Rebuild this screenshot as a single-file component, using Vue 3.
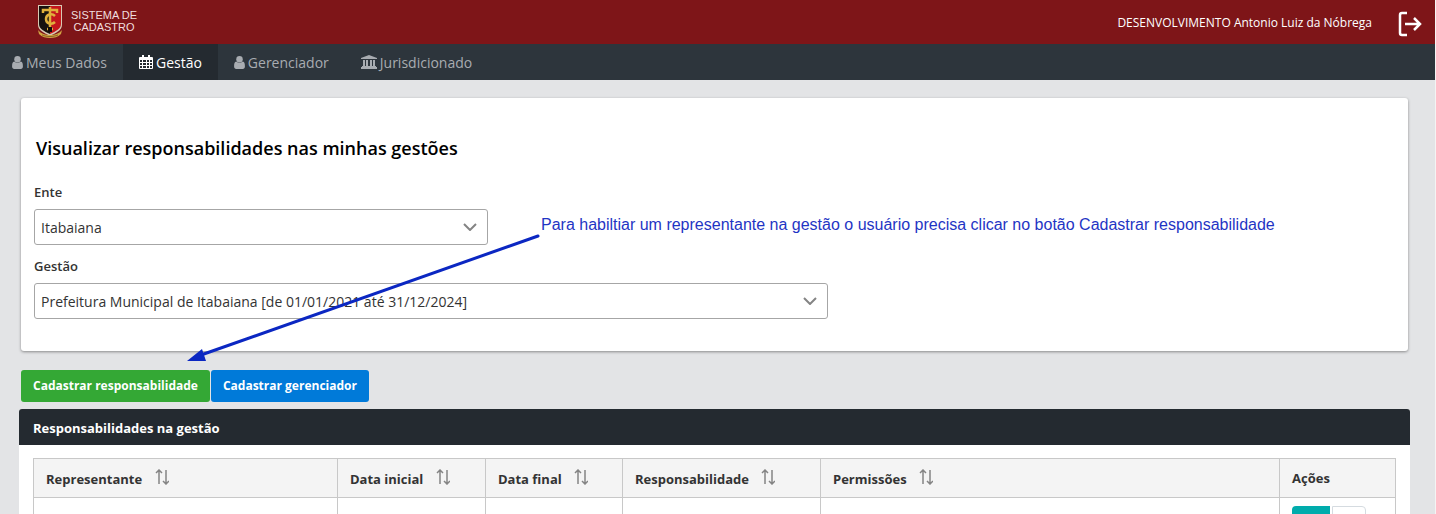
<template>
  <div class="page">
    <header class="topbar">
      <a href="#" class="brand">
        <svg class="crest" viewBox="0 0 26 34" aria-hidden="true">
          <path d="M1 1h24v20c0 5-6 8-12 11C7 29 1 26 1 21z" fill="#d8c9b4" />
          <path d="M2 2h11v28C7 27 2 25 2 20z" fill="#17120f" />
          <path d="M13 2h11v18c0 5-5 7-11 10z" fill="#c4161c" />
          <path d="M6 9V6h14v3M13 3v23M10 25h6" fill="none" stroke="#e0b03c" stroke-width="2.500" />
          <path d="M18 12c-3-3-9-2-9 3s6 6 9 3" fill="none" stroke="#e0b03c" stroke-width="2.500" />
          <path d="M11 23h4v5h-4z" fill="#120c0c" />
          <path d="M1 26c3 4 8 5 12 5s9-1 12-5l-1 4c-3 3-7 4-11 4S5 33 2 30z" fill="#d1a443" />
          <path d="M5 31c5 2 11 2 16 0" fill="none" stroke="#8a6423" stroke-width="1" />
        </svg>
        <span class="brand-name">SISTEMA DE<br />CADASTRO</span>
      </a>
      <div class="user">
        <span>DESENVOLVIMENTO Antonio Luiz da Nóbrega</span>
        <button type="button" class="logout" aria-label="Sair">
          <svg viewBox="0 0 26 26">
            <path d="M10 2H5q-2 0-2 2v18q0 2 2 2h5M8 13h15M17 7l6 6-6 6" />
          </svg>
        </button>
      </div>
    </header>

    <nav class="menu">
      <a v-for="item in menu" :key="item.label" href="#" class="menu-item" :class="{ active: item.active }">
        <svg v-if="item.icon === 'user'" class="icon-user" viewBox="0 0 10 12">
          <ellipse cx="5" cy="3" rx="3" ry="3" />
          <path d="M2 5c2 1.600 4 1.600 6 0 1.600.3 2 2 2 4.700 0 1.500-.8 2.300-2 2.300H2C.8 12 0 11.200 0 9.700 0 7 .4 5.300 2 5z" />
        </svg>
        <svg v-else-if="item.icon === 'calendar'" class="icon-calendar" viewBox="0 0 14 14">
          <path fill-rule="evenodd" d="M1 2h2V0h2v2h4V0h2v2h2q1 0 1 1v10q0 1-1 1H1q-1 0-1-1V3q0-1 1-1zM1 5v2h2V5zm3 0v2h3V5zm4 0v2h2V5zm3 0v2h2V5zM1 8v2h2V8zm3 0v2h3V8zm4 0v2h2V8zm3 0v2h2V8zM1 11v2h2v-2zm3 0v2h3v-2zm4 0v2h2v-2zm3 0v2h2v-2z" />
        </svg>
        <svg v-else class="icon-bank" viewBox="0 0 16 14">
          <path d="M8 0l8 3v1H0V3zM2 5h2v6h1V5h2v6h2V5h2v6h1V5h2v6h1v1H1v-1h1zM0 12h16v2H0z" />
        </svg>
        {{ item.label }}
      </a>
    </nav>

    <main class="content">
      <section class="card">
        <h1>Visualizar responsabilidades nas minhas gestões</h1>
        <label for="ente">Ente</label>
        <div class="dropdown ente">
          <select id="ente" v-model="ente">
            <option>Itabaiana</option>
          </select>
          <svg class="chevron" viewBox="0 0 14 8"><path d="M1 1l6 6 6-6" /></svg>
        </div>
        <label for="gestao">Gestão</label>
        <div class="dropdown gestao">
          <select id="gestao" v-model="gestao">
            <option>Prefeitura Municipal de Itabaiana [de 01/01/2021 até 31/12/2024]</option>
          </select>
          <svg class="chevron" viewBox="0 0 14 8"><path d="M1 1l6 6 6-6" /></svg>
        </div>
        <p class="note">Para habiltiar um representante na gestão o usuário precisa clicar no botão Cadastrar responsabilidade</p>
        <svg class="arrow" viewBox="0 0 354 128" aria-hidden="true">
          <path d="M351 2L14 121" stroke="#0b27c2" stroke-width="3" stroke-linecap="round" />
          <path d="M0 127l15-12 4 12z" fill="#0b27c2" />
        </svg>
      </section>

      <div class="actions">
        <button type="button" class="btn btn-green">Cadastrar responsabilidade</button>
        <button type="button" class="btn btn-blue">Cadastrar gerenciador</button>
      </div>

      <section class="panel">
        <h2>Responsabilidades na gestão</h2>
        <div class="panel-body">
          <table>
            <thead>
              <tr>
                <th v-for="col in columns" :key="col.key" :class="col.key">
                  {{ col.label }}
                  <svg v-if="col.sortable" class="sort" viewBox="0 0 14 16">
                    <path d="M4 15V1M1 4l3-3 3 3M11 1v14M8 12l3 3 3-3" />
                  </svg>
                </th>
              </tr>
            </thead>
            <tbody>
              <tr>
                <td></td>
                <td></td>
                <td></td>
                <td></td>
                <td></td>
                <td>
                  <div class="row-actions">
                    <button type="button" class="btn-view" aria-label="Visualizar"></button>
                    <button type="button" class="btn-more" aria-label="Opções"></button>
                  </div>
                </td>
              </tr>
            </tbody>
          </table>
        </div>
      </section>
    </main>
  </div>
</template>

<script setup>
import { ref } from 'vue';

const ente = ref('Itabaiana');
const gestao = ref('Prefeitura Municipal de Itabaiana [de 01/01/2021 até 31/12/2024]');

const menu = [
  { label: 'Meus Dados', icon: 'user' },
  { label: 'Gestão', icon: 'calendar', active: true },
  { label: 'Gerenciador', icon: 'user' },
  { label: 'Jurisdicionado', icon: 'bank' },
];

const columns = [
  { key: 'representante', label: 'Representante', sortable: true },
  { key: 'inicial', label: 'Data inicial', sortable: true },
  { key: 'final', label: 'Data final', sortable: true },
  { key: 'responsabilidade', label: 'Responsabilidade', sortable: true },
  { key: 'permissoes', label: 'Permissões', sortable: true },
  { key: 'acoes', label: 'Ações' },
];
</script>

<style>
body {
  background: #e3e4e6;
}
html {
  scrollbar-width: none;
}
</style>

<style scoped>
* {
  box-sizing: border-box;
}
.page {
  border-right: 1px solid #f4f4f4;
  font-family: "Open Sans", "Noto Sans", sans-serif;
  font-size: 13px;
  color: #333;
}
.topbar {
  display: flex;
  align-items: center;
  justify-content: space-between;
  height: 44px;
  padding: 0 12px 0 37px;
  background: #7e1518;
  color: #fff;
}
.brand {
  display: flex;
  align-items: center;
  gap: 8px;
  padding-bottom: 3px;
  color: #f0dede;
  text-decoration: none;
}
.crest {
  width: 26px;
  height: 34px;
}
.brand-name {
  font-family: "Liberation Sans", Arial, sans-serif;
  font-size: 11px;
  line-height: 12px;
  text-align: center;
}
.user {
  display: flex;
  align-items: center;
  gap: 25px;
  font-size: 12px;
}
.logout {
  display: flex;
  padding: 3px 0 0;
  border: 0;
  background: none;
}
.logout svg {
  width: 26px;
  height: 26px;
  fill: none;
  stroke: #fff;
  stroke-width: 2.500;
}
.menu {
  display: flex;
  height: 36px;
  background: #2d353c;
}
.menu-item {
  display: flex;
  align-items: center;
  gap: 3px;
  padding: 0 16px;
  color: #a8acb1;
  font-size: 14px;
  text-decoration: none;
}
.menu-item:first-child {
  padding-left: 12px;
}
.menu-item.active {
  background: #242a30;
  color: #fff;
}
.menu-item svg {
  fill: currentColor;
}
.icon-user {
  width: 11px;
  height: 13px;
}
.icon-calendar {
  width: 14px;
  height: 14px;
}
.icon-bank {
  width: 16px;
  height: 14px;
}
.content {
  padding: 18px 25px 0 19px;
}
.card {
  position: relative;
  margin: 0 2px;
  padding: 36px 13px 32px;
  border-radius: 3px;
  background: #fff;
  box-shadow: 0 1px 3px rgba(0, 0, 0, 0.4);
}
h1 {
  margin: 0 0 20px 2px;
  color: #000;
  font-size: 18px;
  font-weight: 600;
  line-height: 28px;
}
label {
  display: block;
  margin-bottom: 7px;
  font-weight: 600;
  line-height: 20px;
}
.dropdown {
  position: relative;
  margin-bottom: 11px;
}
.ente {
  max-width: 454px;
}
.gestao {
  max-width: 794px;
  margin-bottom: 0;
}
select {
  display: block;
  width: 100%;
  height: 36px;
  padding: 0 30px 0 6px;
  border: 1px solid #a6a6a6;
  border-radius: 3px;
  background: #fff;
  color: #333;
  font-family: inherit;
  font-size: 14px;
  appearance: none;
}
.chevron {
  position: absolute;
  top: 14px;
  right: 11px;
  width: 14px;
  height: 8px;
  fill: none;
  stroke: #848484;
  stroke-width: 2;
  pointer-events: none;
}
.note {
  position: absolute;
  top: 117px;
  left: 520px;
  margin: 0;
  color: #1f35c4;
  font-family: "Liberation Sans", Arial, sans-serif;
  font-size: 16px;
  line-height: 20px;
  white-space: nowrap;
}
.arrow {
  position: absolute;
  top: 136px;
  left: 166px;
  width: 354px;
  height: 128px;
  pointer-events: none;
}
.actions {
  display: flex;
  gap: 1px;
  margin: 19px 2px 7px;
}
.btn {
  height: 32px;
  padding: 0 12px 2px;
  border: 0;
  border-radius: 3px;
  color: #fff;
  font-family: inherit;
  font-size: 12px;
  font-weight: 700;
}
.btn-green {
  background: #34a835;
}
.btn-blue {
  background: #007ad9;
}
.panel {
  overflow: hidden;
  border-radius: 3px 3px 0 0;
  background: #fff;
}
h2 {
  margin: 0;
  padding: 2px 14px 0;
  background: #242a30;
  color: #fff;
  font-size: 13px;
  font-weight: 700;
  line-height: 34px;
}
.panel-body {
  padding: 13px 14px;
}
table {
  width: 100%;
  border-collapse: collapse;
  table-layout: fixed;
}
th,
td {
  border: 1px solid #c8c8c8;
  padding: 8px 12px;
}
th {
  height: 39px;
  padding: 0 12px;
  background: #f4f4f4;
  text-align: left;
  white-space: nowrap;
}
.representante {
  width: 304px;
}
.inicial {
  width: 148px;
}
.final {
  width: 137px;
}
.responsabilidade {
  width: 198px;
}
.acoes {
  width: 116px;
}
.sort {
  width: 14px;
  height: 16px;
  margin-left: 9px;
  fill: none;
  stroke: #848484;
  stroke-width: 1.500;
  vertical-align: -1px;
}
.row-actions {
  display: flex;
  gap: 2px;
}
.btn-view,
.btn-more {
  height: 32px;
  border: 0;
}
.btn-view {
  width: 38px;
  border-radius: 4px 0 0 4px;
  background: #00acac;
}
.btn-more {
  width: 34px;
  border: 1px solid #d5dbe0;
  border-radius: 0 4px 4px 0;
  background: #fff;
}
</style>
